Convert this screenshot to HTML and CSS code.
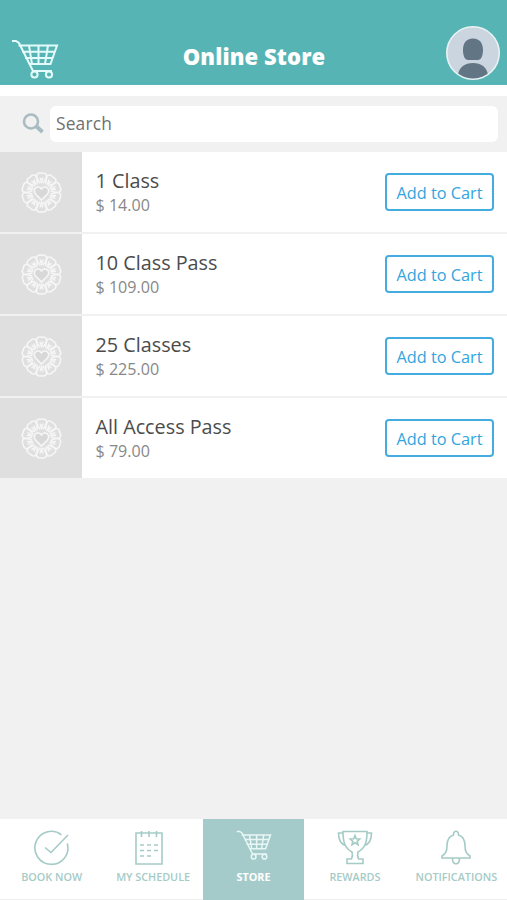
FILE: index.html
```html
<!DOCTYPE html>
<html lang="en">
<head>
<meta charset="utf-8">
<title>Online Store</title>
<link rel="stylesheet" href="styles.css">
</head>
<body>
<svg class="defs" aria-hidden="true">
  <symbol id="cart" viewBox="0 0 48 40">
    <path d="M1 2h4l3 2 14 28M7.500 6.500H46l-6.500 18.500H18M11 12.700h33M14 18.900h28M18 6.500l3 18.500M27.500 6.500V25M37 6.500l-3 18.500M21 32h20"/>
    <circle cx="23.500" cy="35.500" r="3.100"/><circle cx="38" cy="35.500" r="3.100"/>
  </symbol>
  <symbol id="flower" viewBox="-21 -21 42 42">
    <g id="half">
      <path id="petal" d="M-1.200-9L-4.600-13.500c-2-4 1.500-6.300 4.600-5.300 3.100-1 6.600 1.300 4.600 5.300L1.200-9M-1.500-14.500L0-10.500l1.500-4"/>
      <use href="#petal" transform="rotate(36)"/>
      <use href="#petal" transform="rotate(72)"/>
      <use href="#petal" transform="rotate(108)"/>
      <use href="#petal" transform="rotate(144)"/>
    </g>
    <use href="#half" transform="rotate(180)"/>
    <path d="M0 7.500L-5.800 1.500c-4-5 2.500-9.500 5.800-5C3.300-8 9.800-3.500 5.800 1.500z" fill="#d8d8d8"/>
  </symbol>
</svg>
<div class="app">
  <header class="header">
    <svg class="header-cart"><use href="#cart"/></svg>
    <h1 class="title">Online Store</h1>
    <svg class="avatar" viewBox="0 0 54 54">
      <clipPath id="face"><circle cx="27" cy="27" r="25.500"/></clipPath>
      <circle cx="27" cy="27" r="26.200" fill="#cbd5e0" stroke="#e9f3f5" stroke-width="1.600"/>
      <path clip-path="url(#face)" fill="#627585" d="M27 12.500c7 0 10 5 10 11.500 0 6-2 10-5 10H22c-3 0-5-4-5-10 0-6.500 3-11.500 10-11.500zM12 49c1-8 7-12 15-12s14 4 15 12c-3 2.500-9 4-15 4s-12-1.500-15-4z"/>
    </svg>
  </header>
  <div class="search">
    <svg class="lens" viewBox="0 0 22 21"><circle cx="9" cy="8.500" r="7"/><path class="handle" d="M14.500 13.500l6 5.500"/></svg>
    <div class="field">Search</div>
  </div>
  <main class="list">
    <article class="item"><div class="thumb"><svg><use href="#flower"/></svg></div><div class="info"><h2>1 Class</h2><p>$ 14.00</p></div><button>Add to Cart</button></article>
    <article class="item"><div class="thumb"><svg><use href="#flower"/></svg></div><div class="info"><h2>10 Class Pass</h2><p>$ 109.00</p></div><button>Add to Cart</button></article>
    <article class="item"><div class="thumb"><svg><use href="#flower"/></svg></div><div class="info"><h2>25 Classes</h2><p>$ 225.00</p></div><button>Add to Cart</button></article>
    <article class="item"><div class="thumb"><svg><use href="#flower"/></svg></div><div class="info"><h2>All Access Pass</h2><p>$ 79.00</p></div><button>Add to Cart</button></article>
  </main>
  <nav class="tabs">
    <div class="tab"><svg viewBox="0 0 36 36"><path d="M28.500 4.800A16.500 16.500 0 1 0 34.300 13.500M12 17.500l6 5L35 5"/></svg><span>BOOK NOW</span></div>
    <div class="tab schedule"><svg viewBox="0 0 36 36"><path d="M5 3h26v31H5zM10.500 1v6M18 1v6M25.500 1v6"/><path class="dots" d="M9 15h18M9 20.500h18M9 26h12"/></svg><span>MY SCHEDULE</span></div>
    <div class="tab active"><svg class="tab-cart"><use href="#cart"/></svg><span>STORE</span></div>
    <div class="tab"><svg viewBox="0 0 36 36"><path d="M6 1.500h24c0 11-2 17-9 20.500-1 3-.5 5 .5 7h4.500v4.500H10V29h4.500c1-2 1.500-4 .5-7C8 18.500 6 12.500 6 1.500zM6 3H1.500c0 6 2 11 7 12.500M30 3h4.500c0 6-2 11-7 12.500M18 5.500l1.300 3.200 3.500.3-2.600 2.300.8 3.400-3-1.900-3 1.900.8-3.400L13.200 9l3.500-.3z"/></svg><span>REWARDS</span></div>
    <div class="tab bell"><svg viewBox="0 0 36 36"><path d="M15.500 5c0-5 5-5 5 0 5.500 1.500 6.500 6 6.500 11 0 5.500 1.500 7.500 5 10v2H4v-2c3.500-2.500 5-4.500 5-10 0-5 1-9.500 6.500-11zM14.500 28.500c0 7 7 7 7 0"/></svg><span>NOTIFICATIONS</span></div>
  </nav>
</div>
</body>
</html>
```
FILE: styles.css
```css
* { box-sizing: border-box; }
body { margin: 0; font-family: "Open Sans", "Noto Sans", sans-serif; }
svg { display: block; fill: none; }
.defs { position: absolute; width: 0; height: 0; }
.app { width: 507px; height: 900px; display: flex; flex-direction: column; background: #f1f1f1; }
.header { height: 96px; flex: none; display: flex; align-items: flex-start; justify-content: space-between; padding: 26px 7px 0 11px; background: #57b4b4; border-bottom: 11px solid #fff; }
.header-cart { width: 48px; height: 40px; margin-top: 13px; stroke: #e4fbfb; stroke-width: 2; }
.title { margin: 15px 0 0 3px; font-size: 22px; letter-spacing: .1px; line-height: 30px; font-weight: 800; color: #fff; }
.avatar { width: 54px; height: 54px; }
.search { height: 56px; flex: none; display: flex; padding: 10px 9px 0 22px; }
.lens { width: 22px; height: 21px; margin: 7px 6px 0 0; stroke: #a9bcc1; stroke-width: 2.6; }
.handle { stroke-width: 4; }
.field { flex: 1; height: 36px; padding-left: 6px; background: #fff; border-radius: 6px; font-size: 17.4px; letter-spacing: .15px; line-height: 35px; color: #707070; }
.list { flex: 1; }
.item { height: 82px; display: flex; align-items: center; background: #fff; border-bottom: 2px solid #f1f1f1; padding-right: 13px; }
.thumb { width: 82px; height: 80px; display: flex; align-items: center; justify-content: center; background: #dfdfdf; }
.thumb svg { width: 43px; height: 43px; margin-top: 1px; stroke: #f6f6f6; stroke-width: 1.6; }
.info { flex: 1; padding-left: 13.5px; }
h2 { margin: 0; font-size: 19.8px; line-height: 26px; font-weight: 400; color: #4b4b4b; }
p { margin: 0; font-size: 16.1px; line-height: 22px; color: #888; }
button { width: 109px; height: 38px; padding: 2px 0 0; border: 2px solid #45ace0; border-radius: 4px; background: #fff; color: #32a5de; font: 16.3px "Open Sans", sans-serif; }
.tabs { height: 81px; flex: none; display: grid; grid-template-columns: repeat(5, 1fr); background: #fff; border-bottom: 1px solid #eee; }
.tab { display: flex; flex-direction: column; align-items: center; padding-top: 11px; color: #a5cbc6; font-size: 10.8px; font-weight: 600; line-height: 16px; white-space: nowrap; }
.tab svg { width: 36px; height: 36px; margin-bottom: 3px; stroke: #a5cbc6; stroke-width: 1.6; }
.tab.schedule svg { margin-right: 6px; }
.tab.schedule span, .tab:first-child span { margin-left: 2px; }
.dots { stroke-dasharray: 4 3; }
.tab.active { background: #a4cbc9; color: #fff; margin-bottom: -1px; font-weight: 700; }
.tab .tab-cart { height: 32px; width: 36px; margin: -1px 0 8px 1px; stroke: #e8f7f6; stroke-width: 2; }
```
